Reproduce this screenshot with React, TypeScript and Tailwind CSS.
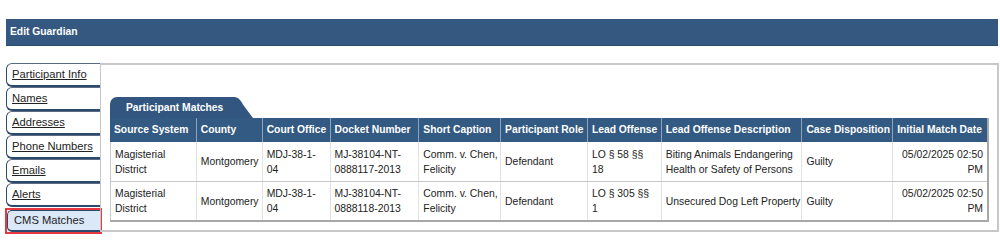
const tabs = ['Participant Info', 'Names', 'Addresses', 'Phone Numbers', 'Emails', 'Alerts']

const columns = [
  { label: 'Source System', w: 'w-[86px]' },
  { label: 'County', w: 'w-[66px]' },
  { label: 'Court Office', w: 'w-[68px]' },
  { label: 'Docket Number', w: 'w-[89px]' },
  { label: 'Short Caption', w: 'w-[82px]' },
  { label: 'Participant Role', w: 'w-[87px]' },
  { label: 'Lead Offense', w: 'w-[74px]' },
  { label: 'Lead Offense Description', w: 'w-[141px]' },
  { label: 'Case Disposition', w: 'w-[91px]' },
  { label: 'Initial Match Date', w: 'w-[95px]' },
]

// each cell is a list of lines, broken where the original table wraps
const rows: string[][][] = [
  [
    ['Magisterial', 'District'],
    ['Montgomery'],
    ['MDJ-38-1-', '04'],
    ['MJ-38104-NT-', '0888117-2013'],
    ['Comm. v. Chen,', 'Felicity'],
    ['Defendant'],
    ['LO § 58 §§', '18'],
    ['Biting Animals Endangering', 'Health or Safety of Persons'],
    ['Guilty'],
    ['05/02/2025 02:50', 'PM'],
  ],
  [
    ['Magisterial', 'District'],
    ['Montgomery'],
    ['MDJ-38-1-', '04'],
    ['MJ-38104-NT-', '0888118-2013'],
    ['Comm. v. Chen,', 'Felicity'],
    ['Defendant'],
    ['LO § 305 §§', '1'],
    ['Unsecured Dog Left Property'],
    ['Guilty'],
    ['05/02/2025 02:50', 'PM'],
  ],
]

export default function App() {
  return (
    <div className="w-[1000px] h-[248px] bg-white pt-[19px] pl-[6px] font-['Liberation_Sans',Arial,sans-serif] text-[#222]">
      <div className="w-[992px] h-[27px] bg-[#34587f] border-b border-[#2a4a6e] flex items-center pl-[4px] text-white font-bold text-[10.3px]">
        Edit Guardian
      </div>

      <div className="flex mt-[17px] w-[993px]">
        {/* side tabs */}
        <div className="w-[94px] flex flex-col">
          {tabs.map((t) => (
            <div
              key={t}
              className="h-[24px] flex items-center pl-[5px] bg-white border border-r-0 border-t-[#5a6a80] border-l-[#2c4a6e] border-b-2 border-b-[#2c4a6e] rounded-l-[6px] text-[11.2px] underline underline-offset-[1px]"
            >
              {t}
            </div>
          ))}
          <div className="mt-[1px] -ml-[1px] w-[97px] border-2 border-[#e5393e]">
            <div className="h-[22px] flex items-center pl-[6px] bg-[#dbe8f8] border-l border-b-2 border-t border-[#2c4a6e] rounded-l-[5px] text-[11.2px]">
              CMS Matches
            </div>
          </div>
        </div>

        {/* main panel */}
        <div className="flex-1 h-[169px] border-l border-t-2 border-r-2 border-b-2 border-[#c8c8c8] pl-[9px] pr-[7px] pt-[32px]">
          <div className="flex items-end h-[21px]">
            <div className="h-[21px] w-[122px] bg-[#325680] rounded-tl-[7px] flex items-center pl-[16px] text-white font-bold text-[10.3px]">
              Participant Matches
            </div>
            <svg width="22" height="21" viewBox="0 0 22 21" className="block">
              <path d="M0 0 H2 C7 0 9 4 12 9 L21 21 H0 Z" fill="#325680" />
            </svg>
          </div>

          <div className="w-[879px] border-r-2 border-b-2 border-[#a8a8a8]">
            <div className="flex h-[24px] bg-[#335a82] text-white font-bold text-[10.3px]">
              {columns.map((c, i) => (
                <div
                  key={c.label}
                  className={`${c.w} flex items-center pl-[4px] whitespace-nowrap overflow-hidden ${i > 0 ? 'border-l border-[#8ea4bd]' : ''}`}
                >
                  {c.label}
                </div>
              ))}
            </div>
            {rows.map((r, ri) => (
              <div key={ri} className={`flex h-[39px] text-[10.4px] leading-[15px] ${ri > 0 ? 'border-t border-[#c8c8c8]' : ''}`}>
                {r.map((lines, ci) => (
                  <div
                    key={ci}
                    className={`${columns[ci].w} flex flex-col justify-center whitespace-nowrap ${ci === 0 ? 'border-l border-[#c8c8c8]' : 'border-l border-[#e2e2e2]'} ${ci === 9 ? 'items-end pr-[4px]' : 'pl-[4px]'}`}
                  >
                    {lines.map((l) => (
                      <span key={l}>{l}</span>
                    ))}
                  </div>
                ))}
              </div>
            ))}
          </div>
        </div>
      </div>
    </div>
  )
}
